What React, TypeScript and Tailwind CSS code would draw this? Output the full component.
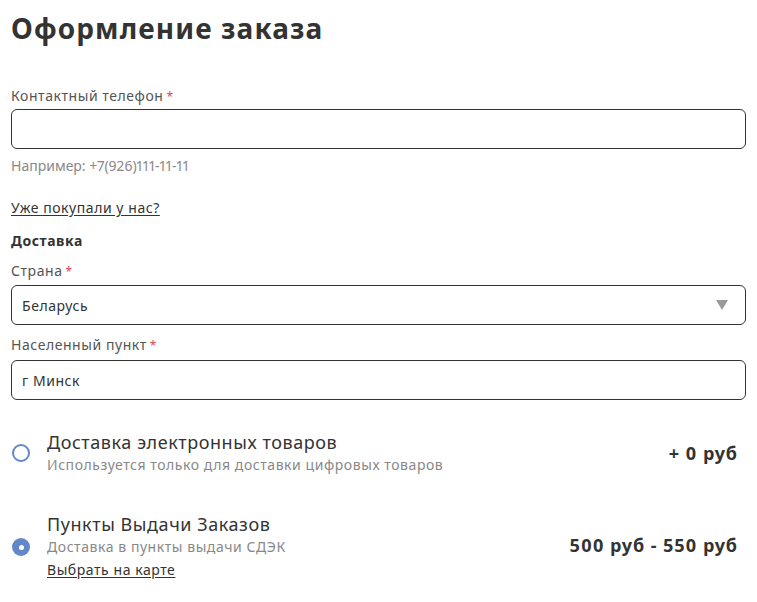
import React from 'react';

const Label = ({ text }: { text: string }) => (
  <div className="h-5 text-[14px] leading-5 text-[#555]">
    {text}
    <span className="ml-[3px] text-[12px] text-[#e0454f]">*</span>
  </div>
);

const Radio = ({ checked }: { checked: boolean }) =>
  checked ? (
    <span className="flex h-[18px] w-[18px] items-center justify-center rounded-full bg-[#6487c9]">
      <span className="h-[5px] w-[5px] rounded-full bg-white" />
    </span>
  ) : (
    <span className="h-[18px] w-[18px] rounded-full border-2 border-[#6487c9] bg-white" />
  );

export default function App() {
  return (
    <div
      className="min-h-screen bg-white px-[11px] tracking-[0.035em] text-[#333] proportional-nums"
      style={{ fontFamily: '"Noto Sans", sans-serif' }}
    >
      <h1 className="pt-[10px] text-[28px] font-bold leading-[36px] tracking-[0.04em] text-[#333]">Оформление заказа</h1>

      <div className="mt-[40px]">
        <Label text="Контактный телефон" />
        <input className="mt-[3px] block h-[40px] w-full rounded-[6px] border border-[#333] px-[10px] text-[14px] outline-none" />
        <div className="mt-[7px] h-5 text-[14px] leading-5 tracking-normal text-[#888]">Например: +7(926)111-11-11</div>
      </div>

      <a className="mt-[22px] block h-5 text-[14px] leading-5 text-[#333] underline underline-offset-2">
        Уже покупали у нас?
      </a>

      <div className="mt-[13px] h-5 text-[14px] font-bold leading-5 text-[#333]">Доставка</div>

      <div className="mt-[10px]">
        <Label text="Страна" />
        <div className="mt-[4px] flex h-[40px] items-center justify-between rounded-[6px] border border-[#333] pl-[10px] pr-[17px] text-[14px]">
          <span>Беларусь</span>
          <svg width="12" height="10" viewBox="0 0 12 10">
            <path d="M0 0h12L6 10z" fill="#9a9a9a" />
          </svg>
        </div>
      </div>

      <div className="mt-[10px]">
        <Label text="Населенный пункт" />
        <div className="mt-[5px] flex h-[40px] items-center rounded-[6px] border border-[#333] px-[10px] text-[14px]">
          г Минск
        </div>
      </div>

      <div className="mt-[30px] flex items-center">
        <div className="flex w-[36px] shrink-0 pl-[1px]">
          <Radio checked={false} />
        </div>
        <div className="flex-1">
          <div className="text-[18px] leading-[24px] text-[#333]">Доставка электронных товаров</div>
          <div className="text-[14px] leading-[22px] text-[#888]">Используется только для доставки цифровых товаров</div>
        </div>
        <div className="pr-[8px] text-[18px] font-bold tracking-[0.05em] text-[#333]">+ 0 руб</div>
      </div>

      <div className="mt-[36px] flex items-center">
        <div className="flex w-[36px] shrink-0 pl-[1px]">
          <Radio checked />
        </div>
        <div className="flex-1">
          <div className="text-[18px] leading-[24px] text-[#333]">Пункты Выдачи Заказов</div>
          <div className="text-[14px] leading-[22px] text-[#888]">Доставка в пункты выдачи СДЭК</div>
          <a className="block text-[14px] leading-[24px] text-[#333] underline underline-offset-2">Выбрать на карте</a>
        </div>
        <div className="pr-[8px] pb-[4px] text-[18px] font-bold tracking-[0.05em] text-[#333]">500 руб - 550 руб</div>
      </div>
    </div>
  );
}
